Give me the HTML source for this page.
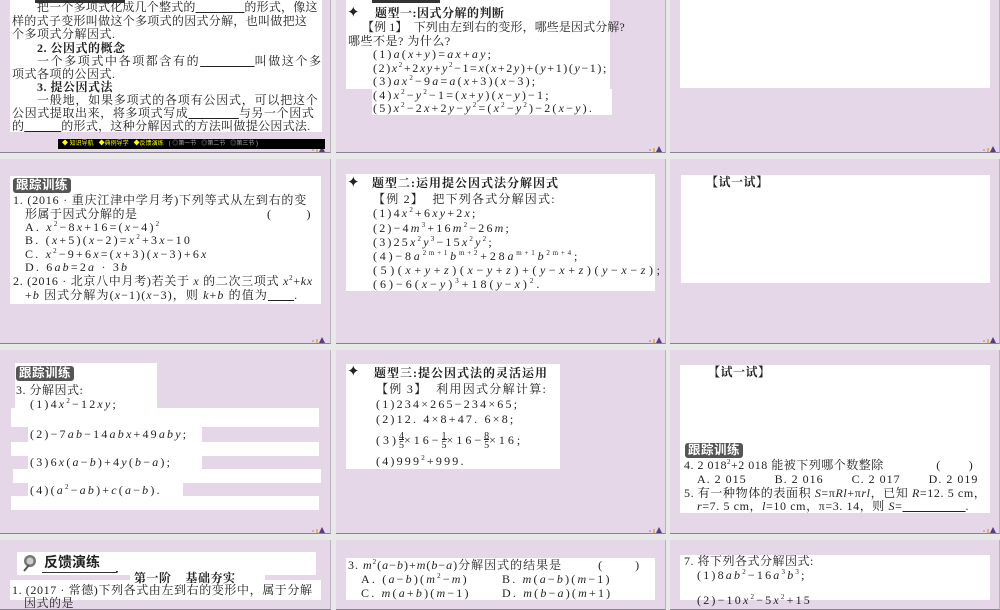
<!DOCTYPE html>
<html><head><meta charset="utf-8"><style>
*{margin:0;padding:0;box-sizing:border-box}
body{width:1000px;height:600px;overflow:hidden;background:#e8e8e8;position:relative;font-family:"Liberation Serif","Noto Serif CJK SC",serif;color:#222}
.s{position:absolute;background:#e5d7e7;border-bottom:1px solid #8a8290;border-right:1px solid #b9b1bd}
.w{position:absolute;background:#fff}
.t{position:absolute;font-size:12px;line-height:13px;white-space:nowrap;letter-spacing:0.5px}
.m{letter-spacing:2.2px}
.b{font-weight:bold}
sup{font-size:7px;line-height:0;vertical-align:5px}
.tag{position:absolute;background:#555;color:#fff;font-family:"Liberation Sans","Noto Sans CJK SC",sans-serif;font-weight:bold;font-size:12.5px;line-height:15px;padding:0 3px;border-radius:3px;letter-spacing:0.5px}
.logo{position:absolute;width:14px;height:8px}
.star{position:absolute;font-size:15px;line-height:13px}
</style></head><body>
<div class="s" style="left:0;top:-40px;width:331px;height:193px"></div>
<div class="s" style="left:336px;top:-40px;width:330px;height:193px"></div>
<div class="s" style="left:670px;top:-40px;width:330px;height:193px"></div>
<div class="s" style="left:0;top:159px;width:331px;height:185px"></div>
<div class="s" style="left:336px;top:159px;width:330px;height:185px"></div>
<div class="s" style="left:670px;top:159px;width:330px;height:185px"></div>
<div class="s" style="left:0;top:350px;width:331px;height:184px"></div>
<div class="s" style="left:336px;top:350px;width:330px;height:184px"></div>
<div class="s" style="left:670px;top:350px;width:330px;height:184px"></div>
<div class="s" style="left:0;top:540px;width:331px;height:70px"></div>
<div class="s" style="left:336px;top:540px;width:330px;height:70px"></div>
<div class="s" style="left:670px;top:540px;width:330px;height:70px"></div>

<svg class="logo" style="left:311px;top:144px" viewBox="0 0 14 8"><circle cx="2" cy="6" r="1" fill="#c9a"/><rect x="5" y="4" width="2" height="4" fill="#d9b860"/><path d="M8 8 L11 2 L14 8Z" fill="#5a3a8a"/></svg>
<svg class="logo" style="left:648px;top:144px" viewBox="0 0 14 8"><circle cx="2" cy="6" r="1" fill="#c9a"/><rect x="5" y="4" width="2" height="4" fill="#d9b860"/><path d="M8 8 L11 2 L14 8Z" fill="#5a3a8a"/></svg>
<svg class="logo" style="left:982px;top:144px" viewBox="0 0 14 8"><circle cx="2" cy="6" r="1" fill="#c9a"/><rect x="5" y="4" width="2" height="4" fill="#d9b860"/><path d="M8 8 L11 2 L14 8Z" fill="#5a3a8a"/></svg>
<svg class="logo" style="left:311px;top:335px" viewBox="0 0 14 8"><circle cx="2" cy="6" r="1" fill="#c9a"/><rect x="5" y="4" width="2" height="4" fill="#d9b860"/><path d="M8 8 L11 2 L14 8Z" fill="#5a3a8a"/></svg>
<svg class="logo" style="left:648px;top:335px" viewBox="0 0 14 8"><circle cx="2" cy="6" r="1" fill="#c9a"/><rect x="5" y="4" width="2" height="4" fill="#d9b860"/><path d="M8 8 L11 2 L14 8Z" fill="#5a3a8a"/></svg>
<svg class="logo" style="left:982px;top:335px" viewBox="0 0 14 8"><circle cx="2" cy="6" r="1" fill="#c9a"/><rect x="5" y="4" width="2" height="4" fill="#d9b860"/><path d="M8 8 L11 2 L14 8Z" fill="#5a3a8a"/></svg>
<svg class="logo" style="left:311px;top:525px" viewBox="0 0 14 8"><circle cx="2" cy="6" r="1" fill="#c9a"/><rect x="5" y="4" width="2" height="4" fill="#d9b860"/><path d="M8 8 L11 2 L14 8Z" fill="#5a3a8a"/></svg>
<svg class="logo" style="left:648px;top:525px" viewBox="0 0 14 8"><circle cx="2" cy="6" r="1" fill="#c9a"/><rect x="5" y="4" width="2" height="4" fill="#d9b860"/><path d="M8 8 L11 2 L14 8Z" fill="#5a3a8a"/></svg>
<svg class="logo" style="left:982px;top:525px" viewBox="0 0 14 8"><circle cx="2" cy="6" r="1" fill="#c9a"/><rect x="5" y="4" width="2" height="4" fill="#d9b860"/><path d="M8 8 L11 2 L14 8Z" fill="#5a3a8a"/></svg>

<!-- R1C1 -->
<div class="w" style="left:10px;top:0;width:312px;height:132px"></div>
<div class="w" style="left:35px;top:0;width:90px;height:3px;background:#333"></div>
<div class="t" style="left:37px;top:1px;letter-spacing:0.2px">把一个多项式化成几个整式的<u>&#12288;&#12288;&#12288;&#12288;</u>的形式，像这</div>
<div class="t" style="left:12px;top:15px;letter-spacing:0.3px">样的式子变形叫做这个多项式的因式分解，也叫做把这</div>
<div class="t" style="left:12px;top:28px">个多项式分解因式.</div>
<div class="t b" style="left:37px;top:42px">2. 公因式的概念</div>
<div class="t" style="left:37px;top:55px;letter-spacing:1.6px">一个多项式中各项都含有的<u>&#12288;&#12288;&#12288;&#12288;</u>叫做这个多</div>
<div class="t" style="left:12px;top:68px">项式各项的公因式.</div>
<div class="t b" style="left:37px;top:81px">3. 提公因式法</div>
<div class="t" style="left:37px;top:94px;letter-spacing:0.8px">一般地，如果多项式的各项有公因式，可以把这个</div>
<div class="t" style="left:12px;top:107px;letter-spacing:0.6px">公因式提取出来，将多项式写成<u>&#12288;&#12288;&#12288;&#12288;</u>与另一个因式</div>
<div class="t" style="left:12px;top:120px;letter-spacing:0.3px">的<u>&#12288;&#12288;&#12288;</u>的形式，这种分解因式的方法叫做提公因式法.</div>
<div style="position:absolute;left:58px;top:139px;width:267px;height:10px;background:#000;color:#ff0;font-size:6px;line-height:10px;padding-left:4px;font-family:'Liberation Sans','Noto Sans CJK SC',sans-serif;white-space:nowrap">◆ 知识导航 &nbsp; ◆典例导学 &nbsp; ◆反馈演练 <span style="color:#aaa">&nbsp; ( ◎第一节 &nbsp; ◎第二节 &nbsp; ◎第三节 )</span></div>

<!-- R1C2 -->
<div class="w" style="left:346px;top:0;width:264px;height:89px"></div>
<div class="w" style="left:372px;top:89px;width:240px;height:26px"></div>
<div class="w" style="left:372px;top:0;width:68px;height:3px;background:#333"></div>
<div class="star" style="left:347px;top:7px">✦</div>
<div class="t b" style="left:375px;top:7px">题型一:因式分解的判断</div>
<div class="t" style="left:362px;top:21px;letter-spacing:0.1px">【例 1】 &nbsp;下列由左到右的变形，哪些是因式分解?</div>
<div class="t" style="left:348px;top:35px">哪些不是? 为什么?</div>
<div class="t m" style="left:373px;top:48px">(1)<i>a</i>(<i>x</i>+<i>y</i>)=<i>ax</i>+<i>ay</i>;</div>
<div class="t m" style="left:373px;top:62px;letter-spacing:1.6px">(2)<i>x</i><sup>2</sup>+2<i>xy</i>+<i>y</i><sup>2</sup>−1=<i>x</i>(<i>x</i>+2<i>y</i>)+(<i>y</i>+1)(<i>y</i>−1);</div>
<div class="t m" style="left:373px;top:75px">(3)<i>ax</i><sup>2</sup>−9<i>a</i>=<i>a</i>(<i>x</i>+3)(<i>x</i>−3);</div>
<div class="t m" style="left:373px;top:89px">(4)<i>x</i><sup>2</sup>−<i>y</i><sup>2</sup>−1=(<i>x</i>+<i>y</i>)(<i>x</i>−<i>y</i>)−1;</div>
<div class="t m" style="left:373px;top:102px">(5)<i>x</i><sup>2</sup>−2<i>x</i>+2<i>y</i>−<i>y</i><sup>2</sup>=(<i>x</i><sup>2</sup>−<i>y</i><sup>2</sup>)−2(<i>x</i>−<i>y</i>).</div>

<!-- R1C3 -->
<div class="w" style="left:680px;top:0;width:310px;height:88px"></div>

<!-- R2C1 -->
<div class="w" style="left:10px;top:176px;width:311px;height:128px"></div>
<div class="tag" style="left:13px;top:178px">跟踪训练</div>
<div class="t" style="left:13px;top:194px;letter-spacing:0.8px">1. (2016 · 重庆江津中学月考)下列等式从左到右的变</div>
<div class="t" style="left:25px;top:208px">形属于因式分解的是 &nbsp; &nbsp; &nbsp; &nbsp; &nbsp; &nbsp; &nbsp; &nbsp; &nbsp; &nbsp; &nbsp; &nbsp; &nbsp; &nbsp; &nbsp; &nbsp; &nbsp; &nbsp; ( &nbsp; &nbsp; &nbsp; &nbsp; &nbsp;)</div>
<div class="t m" style="left:25px;top:221px">A. <i>x</i><sup>2</sup>−8<i>x</i>+16=(<i>x</i>−4)<sup>2</sup></div>
<div class="t m" style="left:25px;top:234px">B. (<i>x</i>+5)(<i>x</i>−2)=<i>x</i><sup>2</sup>+3<i>x</i>−10</div>
<div class="t m" style="left:25px;top:248px">C. <i>x</i><sup>2</sup>−9+6<i>x</i>=(<i>x</i>+3)(<i>x</i>−3)+6<i>x</i></div>
<div class="t m" style="left:25px;top:261px">D. 6<i>ab</i>=2<i>a</i> · 3<i>b</i></div>
<div class="t" style="left:13px;top:275px;letter-spacing:0.7px">2. (2016 · 北京八中月考)若关于 <i>x</i> 的二次三项式 <i>x</i><sup>2</sup>+<i>kx</i></div>
<div class="t" style="left:25px;top:289px;letter-spacing:1.1px">+<i>b</i> 因式分解为(<i>x</i>−1)(<i>x</i>−3)，则 <i>k</i>+<i>b</i> 的值为<u>&#12288;&#12288;</u>.</div>

<!-- R2C2 -->
<div class="w" style="left:346px;top:174px;width:309px;height:117px"></div>
<div class="star" style="left:347px;top:177px">✦</div>
<div class="t b" style="left:372px;top:177px;letter-spacing:1px">题型二:运用提公因式法分解因式</div>
<div class="t" style="left:373px;top:193px;letter-spacing:1.2px">【例 2】 &nbsp;把下列各式分解因式:</div>
<div class="t m" style="left:373px;top:207px">(1)4<i>x</i><sup>2</sup>+6<i>xy</i>+2<i>x</i>;</div>
<div class="t m" style="left:373px;top:222px">(2)−4<i>m</i><sup>3</sup>+16<i>m</i><sup>2</sup>−26<i>m</i>;</div>
<div class="t m" style="left:373px;top:236px">(3)25<i>x</i><sup>2</sup><i>y</i><sup>3</sup>−15<i>x</i><sup>2</sup><i>y</i><sup>2</sup>;</div>
<div class="t m" style="left:373px;top:250px;letter-spacing:2.8px">(4)−8<i>a</i><sup>2m+1</sup><i>b</i><sup>m+2</sup>+28<i>a</i><sup>m+1</sup><i>b</i><sup>2m+4</sup>;</div>
<div class="t m" style="left:373px;top:264px;letter-spacing:3.6px">(5)(<i>x</i>+<i>y</i>+<i>z</i>)(<i>x</i>−<i>y</i>+<i>z</i>)+(<i>y</i>−<i>x</i>+<i>z</i>)(<i>y</i>−<i>x</i>−<i>z</i>);</div>
<div class="t m" style="left:373px;top:278px;letter-spacing:3px">(6)−6(<i>x</i>−<i>y</i>)<sup>3</sup>+18(<i>y</i>−<i>x</i>)<sup>2</sup>.</div>

<!-- R2C3 -->
<div class="w" style="left:681px;top:175px;width:309px;height:108px"></div>
<div class="t b" style="left:706px;top:176px">【试一试】</div>

<!-- R3C1 -->
<div class="w" style="left:15px;top:363px;width:142px;height:46px"></div>
<div class="w" style="left:11px;top:408px;width:308px;height:19px"></div>
<div class="w" style="left:28px;top:427px;width:174px;height:15px"></div>
<div class="w" style="left:11px;top:442px;width:308px;height:14px"></div>
<div class="w" style="left:28px;top:456px;width:174px;height:13px"></div>
<div class="w" style="left:13px;top:469px;width:308px;height:14px"></div>
<div class="w" style="left:28px;top:483px;width:155px;height:13px"></div>
<div class="w" style="left:11px;top:496px;width:308px;height:14px"></div>
<div class="tag" style="left:16px;top:366px">跟踪训练</div>
<div class="t" style="left:16px;top:384px">3. 分解因式:</div>
<div class="t m" style="left:30px;top:398px">(1)4<i>x</i><sup>2</sup>−12<i>xy</i>;</div>
<div class="t m" style="left:30px;top:428px">(2)−7<i>ab</i>−14<i>abx</i>+49<i>aby</i>;</div>
<div class="t m" style="left:30px;top:456px">(3)6<i>x</i>(<i>a</i>−<i>b</i>)+4<i>y</i>(<i>b</i>−<i>a</i>);</div>
<div class="t m" style="left:30px;top:484px">(4)(<i>a</i><sup>2</sup>−<i>ab</i>)+<i>c</i>(<i>a</i>−<i>b</i>).</div>

<!-- R3C2 -->
<div class="w" style="left:346px;top:364px;width:214px;height:105px"></div>
<div class="star" style="left:347px;top:366px">✦</div>
<div class="t b" style="left:374px;top:367px;letter-spacing:1px">题型三:提公因式法的灵活运用</div>
<div class="t" style="left:376px;top:383px;letter-spacing:1.3px">【例 3】 &nbsp;利用因式分解计算:</div>
<div class="t m" style="left:376px;top:398px">(1)234×265−234×65;</div>
<div class="t m" style="left:376px;top:413px">(2)12. 4×8+47. 6×8;</div>
<div class="t m" style="left:376px;top:432px;line-height:16px;letter-spacing:3px">(3)<span style="display:inline-block;vertical-align:middle;text-align:center;font-size:10px;line-height:9px;letter-spacing:0">4<br><span style="border-top:1px solid #222">5</span></span>×16−<span style="display:inline-block;vertical-align:middle;text-align:center;font-size:10px;line-height:9px;letter-spacing:0">1<br><span style="border-top:1px solid #222">5</span></span>×16−<span style="display:inline-block;vertical-align:middle;text-align:center;font-size:10px;line-height:9px;letter-spacing:0">8<br><span style="border-top:1px solid #222">5</span></span>×16;</div>
<div class="t m" style="left:376px;top:455px">(4)999<sup>2</sup>+999.</div>

<!-- R3C3 -->
<div class="w" style="left:680px;top:365px;width:310px;height:148px"></div>
<div class="t b" style="left:708px;top:366px">【试一试】</div>
<div class="tag" style="left:685px;top:443px">跟踪训练</div>
<div class="t" style="left:684px;top:459px">4. 2 018<sup>2</sup>+2 018 能被下列哪个数整除 &nbsp; &nbsp; &nbsp; &nbsp; &nbsp; &nbsp; &nbsp; ( &nbsp; &nbsp; &nbsp; &nbsp;)</div>
<div class="t" style="left:697px;top:473px;letter-spacing:1px">A. 2 015 &nbsp; &nbsp; &nbsp; B. 2 016 &nbsp; &nbsp; &nbsp; C. 2 017 &nbsp; &nbsp; &nbsp; D. 2 019</div>
<div class="t" style="left:684px;top:487px;letter-spacing:0.6px">5. 有一种物体的表面积 <i>S</i>=π<i>Rl</i>+π<i>rl</i>，已知 <i>R</i>=12. 5 cm，</div>
<div class="t" style="left:697px;top:500px;letter-spacing:0.6px"><i>r</i>=7. 5 cm，<i>l</i>=10 cm，π=3. 14，则 <i>S</i>=<u>&#12288;&#12288;&#12288;&#12288;&#12288;</u>.</div>

<!-- R4C1 -->
<div class="w" style="left:17px;top:552px;width:299px;height:23px"></div>
<div class="w" style="left:10px;top:580px;width:311px;height:20px"></div>
<div class="w" style="left:130px;top:575px;width:135px;height:6px"></div>
<svg style="position:absolute;left:20px;top:553px" width="22" height="20" viewBox="0 0 22 20"><circle cx="10" cy="8" r="6" fill="#777"/><circle cx="10" cy="8" r="3.5" fill="#ccc"/><path d="M4 18 L9 12" stroke="#555" stroke-width="2"/></svg>
<div style="position:absolute;left:44px;top:553px;font-family:'Liberation Sans','Noto Sans CJK SC',sans-serif;font-weight:bold;font-size:14px;line-height:18px">反馈演练</div>
<div style="position:absolute;left:42px;top:571px;width:76px;height:2px;border-bottom:1px solid #333;border-right:2px solid #333;border-radius:0 0 4px 0"></div>
<div class="t b" style="left:134px;top:572px">第一阶 &nbsp; &nbsp;基础夯实</div>
<div class="t" style="left:12px;top:584px;letter-spacing:0.6px">1. (2017 · 常德)下列各式由左到右的变形中，属于分解</div>
<div class="t" style="left:24px;top:597px">因式的是</div>

<!-- R4C2 -->
<div class="w" style="left:346px;top:558px;width:309px;height:42px"></div>
<div class="t" style="left:348px;top:559px;letter-spacing:1px">3. <i>m</i><sup>2</sup>(<i>a</i>−<i>b</i>)+<i>m</i>(<i>b</i>−<i>a</i>)分解因式的结果是 &nbsp; &nbsp; &nbsp; &nbsp; ( &nbsp; &nbsp; &nbsp; &nbsp;)</div>
<div class="t m" style="left:361px;top:573px">A. (<i>a</i>−<i>b</i>)(<i>m</i><sup>2</sup>−<i>m</i>)</div>
<div class="t m" style="left:502px;top:573px">B. <i>m</i>(<i>a</i>−<i>b</i>)(<i>m</i>−1)</div>
<div class="t m" style="left:361px;top:587px">C. <i>m</i>(<i>a</i>+<i>b</i>)(<i>m</i>−1)</div>
<div class="t m" style="left:502px;top:587px">D. <i>m</i>(<i>b</i>−<i>a</i>)(<i>m</i>+1)</div>

<!-- R4C3 -->
<div class="w" style="left:680px;top:555px;width:310px;height:45px"></div>
<div class="t" style="left:684px;top:555px">7. 将下列各式分解因式:</div>
<div class="t m" style="left:697px;top:569px">(1)8<i>ab</i><sup>2</sup>−16<i>a</i><sup>3</sup><i>b</i><sup>3</sup>;</div>
<div class="t m" style="left:697px;top:594px">(2)−10<i>x</i><sup>2</sup>−5<i>x</i><sup>2</sup>+15</div>
</body></html>
